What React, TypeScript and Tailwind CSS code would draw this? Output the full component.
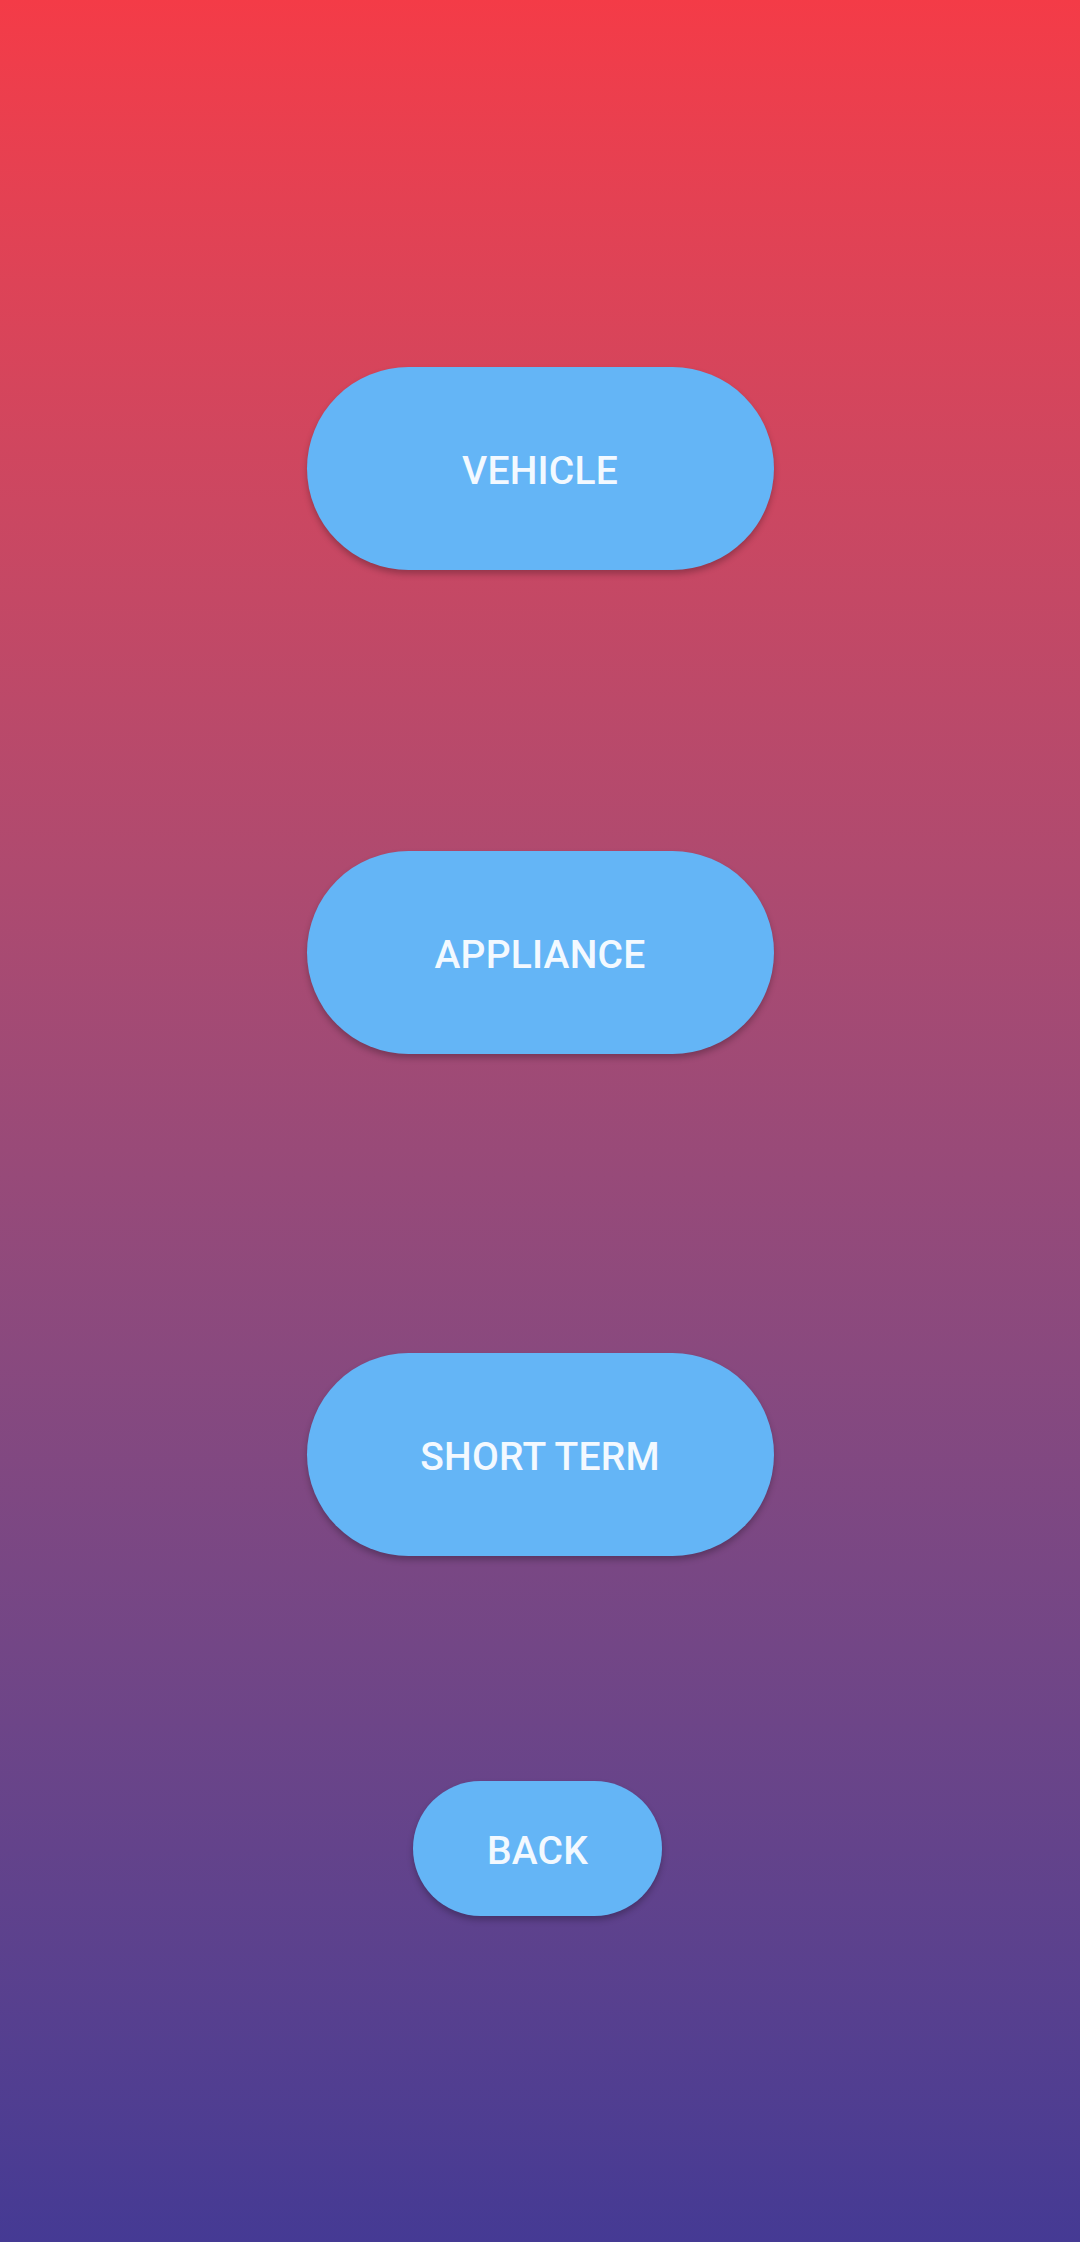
import React from 'react';

const PillButton: React.FC<{ label: string; className?: string }> = ({ label, className = '' }) => (
  <button
    className={`flex items-center justify-center rounded-full bg-[#64b5f6] text-[#f3f9ff] font-medium text-[39px] tracking-[0.2px] pt-[6px] shadow-[0_4px_6px_rgba(0,0,0,0.25)] ${className}`}
    style={{ fontFamily: 'Roboto, "Noto Sans", sans-serif' }}
  >
    {label}
  </button>
);

const App: React.FC = () => {
  return (
    <div className="w-[1080px] h-[2242px] bg-gradient-to-b from-[#f43b47] to-[#453a94] flex flex-col items-center pt-[367px]">
      <PillButton label="VEHICLE" className="w-[467px] h-[203px]" />
      <PillButton label="APPLIANCE" className="w-[467px] h-[203px] mt-[281px]" />
      <PillButton label="SHORT TERM" className="w-[467px] h-[203px] mt-[299px]" />
      <PillButton label="BACK" className="w-[249px] h-[135px] mt-[225px] mr-[5px]" />
    </div>
  );
};

export default App;
